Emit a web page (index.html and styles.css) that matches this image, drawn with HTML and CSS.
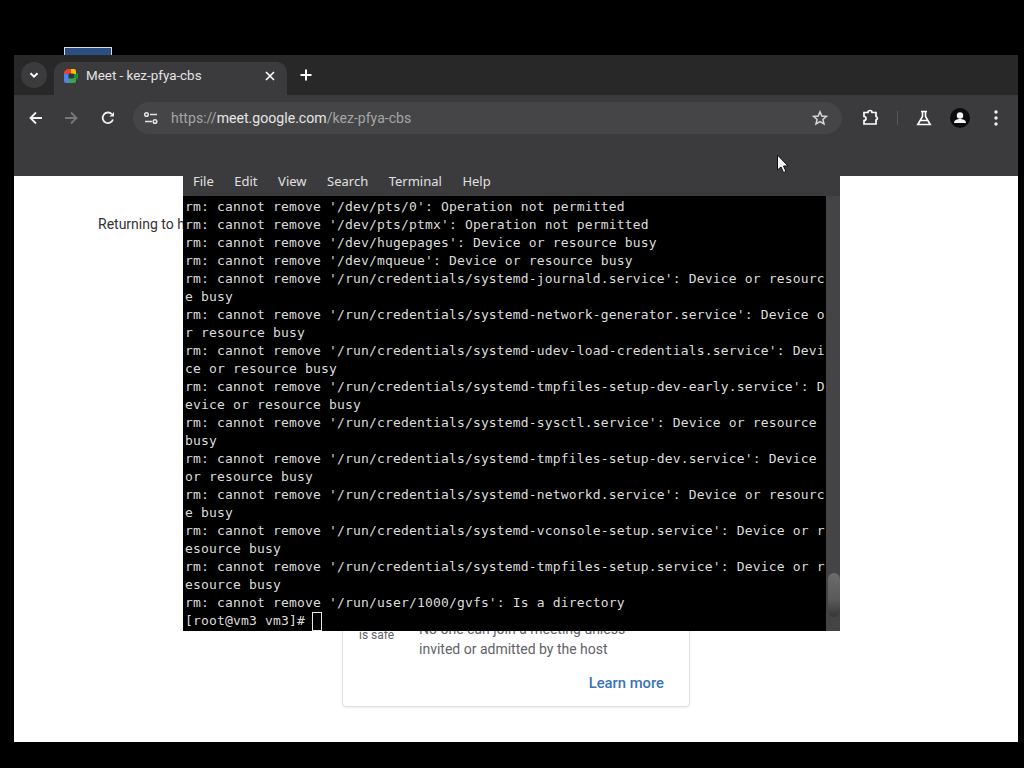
FILE: index.html
```html
<!DOCTYPE html>
<html lang="en">
<head>
<meta charset="utf-8">
<title>Meet - kez-pfya-cbs</title>
<link rel="stylesheet" href="styles.css">
</head>
<body class="desktop">
<div class="back-window"></div>
<main class="browser">
  <div class="tabstrip">
    <button class="tab-search" aria-label="Search tabs"><svg width="12" height="12" viewBox="0 0 12 12"><path d="M2.500 4.200 6 7.700l3.500-3.500" fill="none" stroke="#fff" stroke-width="2"/></svg></button>
    <div class="tab">
      <svg class="favicon" width="16" height="16" viewBox="0 0 16 16"><path d="M4 1h4v5H1V4z" fill="#ea4335"/><path d="M8 1h3a2 2 0 0 1 2 2v3H8z" fill="#fbbc04"/><path d="M1 6h5v4H1z" fill="#4285f4"/><path d="M1 10h5v5H3a2 2 0 0 1-2-2z" fill="#5b7fe0"/><path d="M6 10h7v3a2 2 0 0 1-2 2H6z" fill="#34a853"/><path d="M11 6h2l2-1.500v7L13 10h-2z" fill="#1e8e3e"/><rect x="5.500" y="5.500" width="5" height="5" fill="#2f3a34"/></svg>
      <span class="tab-title">Meet - kez-pfya-cbs</span>
      <svg class="tab-close" width="10" height="10" viewBox="0 0 10 10"><path d="M1 1l8 8M9 1 1 9" stroke="#fff" stroke-width="1.700"/></svg>
    </div>
    <svg class="new-tab" width="12" height="12" viewBox="0 0 12 12"><path d="M6 .5v11M.5 6h11" stroke="#fff" stroke-width="2"/></svg>
  </div>
  <div class="toolbar">
    <div class="toolrow">
      <svg class="nav-back" width="16" height="16" viewBox="0 0 16 16"><path d="M14 8H3M8 2.500 2.500 8 8 13.500" fill="none" stroke="#f1f1f1" stroke-width="1.800"/></svg>
      <svg class="nav-forward" width="16" height="16" viewBox="0 0 16 16"><path d="M2 8h11M8 2.500 13.500 8 8 13.500" fill="none" stroke="#77787a" stroke-width="1.800"/></svg>
      <svg class="nav-reload" width="16" height="16" viewBox="0 0 16 16"><path d="M13 9.500A5.300 5.300 0 1 1 11.700 4" fill="none" stroke="#f1f1f1" stroke-width="1.800"/><path d="M9.500 6.500H14V2z" fill="#f1f1f1"/></svg>
      <div class="omnibox">
        <svg class="site-info" width="16" height="16" viewBox="0 0 16 16"><g fill="none" stroke="#e3e3e3" stroke-width="1.500"><path d="M7 4.500h7M2 11.500h7"/><circle cx="3.500" cy="4.500" r="1.800"/><circle cx="12" cy="11.500" r="1.800"/></g></svg>
        <span class="url"><span class="url-dim">https://</span>meet.google.com<span class="url-dim">/kez-pfya-cbs</span></span>
        <svg class="star" width="16" height="16" viewBox="0 0 16 16"><path d="M8 1.800 9.800 6l4.600.4-3.500 3 1.100 4.500L8 11.500l-4 2.400 1.100-4.500-3.500-3L6.200 6z" fill="none" stroke="#d8d8d8" stroke-width="1.500"/></svg>
      </div>
      <svg class="tool-ext" width="18" height="18" viewBox="0 0 18 18"><path d="M2 4.500h4a2 2 0 0 1 4 0h4v4a1.800 1.800 0 0 1 0 3.500v4H2v-3.500a2 2 0 0 0 0-4z" transform="translate(0 -1)" fill="none" stroke="#fff" stroke-width="1.700"/></svg>
      <span class="divider"></span>
      <svg class="tool-lab" width="18" height="18" viewBox="0 0 18 18"><path d="M6 2.500h6M7.500 2.500v5L2.800 15.500h12.400L10.500 7.500v-5M5.500 11.500h7" fill="none" stroke="#fff" stroke-width="1.600"/></svg>
      <svg class="tool-profile" width="20" height="20" viewBox="0 0 20 20"><circle cx="10" cy="10" r="10" fill="#0c0c0c"/><circle cx="10" cy="7.500" r="3.200" fill="#f4f4f4"/><path d="M4 15c0-3 3-4 6-4s6 1 6 4z" fill="#f4f4f4"/></svg>
      <svg class="tool-menu" width="4" height="16" viewBox="0 0 4 16"><circle cx="2" cy="2" r="1.700" fill="#f1f1f1"/><circle cx="2" cy="8" r="1.700" fill="#f1f1f1"/><circle cx="2" cy="14" r="1.700" fill="#f1f1f1"/></svg>
    </div>
  </div>
  <div class="page">
    <p class="returning">Returning to home screen</p>
    <section class="card">
      <div class="card-row">
        <div class="card-head">Your meeting<br>is safe</div>
        <div class="card-body">No one can join a meeting unless invited or admitted by the host</div>
      </div>
      <a class="learn">Learn more</a>
    </section>
  </div>
</main>
<section class="terminal">
  <nav class="term-menu"><span>File</span><span>Edit</span><span>View</span><span>Search</span><span>Terminal</span><span>Help</span></nav>
  <div class="term-main">
<pre class="term-text">rm: cannot remove '/dev/pts/0': Operation not permitted
rm: cannot remove '/dev/pts/ptmx': Operation not permitted
rm: cannot remove '/dev/hugepages': Device or resource busy
rm: cannot remove '/dev/mqueue': Device or resource busy
rm: cannot remove '/run/credentials/systemd-journald.service': Device or resourc
e busy
rm: cannot remove '/run/credentials/systemd-network-generator.service': Device o
r resource busy
rm: cannot remove '/run/credentials/systemd-udev-load-credentials.service': Devi
ce or resource busy
rm: cannot remove '/run/credentials/systemd-tmpfiles-setup-dev-early.service': D
evice or resource busy
rm: cannot remove '/run/credentials/systemd-sysctl.service': Device or resource 
busy
rm: cannot remove '/run/credentials/systemd-tmpfiles-setup-dev.service': Device 
or resource busy
rm: cannot remove '/run/credentials/systemd-networkd.service': Device or resourc
e busy
rm: cannot remove '/run/credentials/systemd-vconsole-setup.service': Device or r
esource busy
rm: cannot remove '/run/credentials/systemd-tmpfiles-setup.service': Device or r
esource busy
rm: cannot remove '/run/user/1000/gvfs': Is a directory
[root@vm3 vm3]# <span class="term-cursor"> </span></pre>
    <div class="term-scroll"><div class="term-thumb"></div></div>
  </div>
</section>
<svg class="mouse" width="14" height="21" viewBox="0 0 14 21"><path d="M1.500 1v15l3.500-3 2.500 5.500 2.500-1-2.500-5.500h4.500z" fill="#f4f4f4" stroke="#111" stroke-width="1"/></svg>
</body>
</html>
```
FILE: styles.css
```css
* { box-sizing: border-box; }
html, body { margin: 0; height: 100%; }
.desktop {
  background: #000;
  width: 1024px;
  height: 768px;
  padding: 55px 6px 26px 14px;
  overflow: hidden;
  position: relative;
  font-family: Roboto, "Liberation Sans", sans-serif;
}
.back-window {
  position: absolute;
  left: 64px;
  top: 47px;
  width: 48px;
  height: 8px;
  background: #2a4f80;
  border: 1px solid #d8dde4;
  border-bottom: 0;
}
.browser {
  height: 687px;
  display: flex;
  flex-direction: column;
  background: #fff;
}
.tabstrip {
  height: 40px;
  background: #282828;
  display: flex;
  align-items: flex-start;
  padding: 7px 0 0 7px;
}
.tab-search {
  width: 26px;
  height: 26px;
  border: 0;
  padding: 0;
  border-radius: 50%;
  background: #3b3b3d;
  display: flex;
  align-items: center;
  justify-content: center;
}
.tab {
  width: 233px;
  height: 33px;
  margin-left: 7px;
  background: #3b3b3d;
  border-radius: 10px 10px 0 0;
  display: flex;
  align-items: center;
  padding: 0 12px 6px 9px;
}
.tab-title {
  flex: 1;
  margin-left: 7px;
  font-size: 13.400px;
  color: #e3e3e3;
}
.new-tab { margin: 7px 0 0 13px; }
.toolbar {
  height: 81px;
  background: #3b3b3d;
  padding-top: 7px;
}
.toolrow {
  display: flex;
  align-items: center;
  height: 32px;
}
.nav-back { margin-left: 14px; }
.nav-forward { margin-left: 19px; }
.nav-reload { margin-left: 21px; }
.omnibox {
  width: 709px;
  height: 32px;
  margin-left: 17px;
  border-radius: 16px;
  background: #454547;
  display: flex;
  align-items: center;
  padding: 0 14px 0 10px;
}
.url {
  flex: 1;
  margin-left: 12px;
  font-size: 14.100px;
  color: #e6e6e6;
}
.url-dim { color: #a4a4a6; }
.tool-ext { margin-left: 20px; }
.divider {
  width: 1px;
  height: 14px;
  margin-left: 17px;
  background: #58585a;
}
.tool-lab { margin-left: 17px; }
.tool-profile { margin-left: 17px; }
.tool-menu { margin-left: 24px; }
.page {
  flex: 1;
  min-height: 0;
  color: #3c4043;
}
.returning {
  margin: 40px 0 0 84px;
  font-size: 14px;
  line-height: 16px;
  color: #333;
}
.card {
  width: 348px;
  height: 300px;
  margin: 175px 0 0 328px;
  border: 1px solid #e0e0e0;
  border-radius: 4px;
  box-shadow: 0 1px 2px rgba(0, 0, 0, .08);
  padding: 0 25px 13px 16px;
  display: flex;
  flex-direction: column;
  justify-content: flex-end;
}
.card-row {
  display: flex;
  align-items: flex-end;
}
.card-head {
  width: 60px;
  margin-bottom: 16px;
  font-size: 12px;
  line-height: 16px;
  color: #5f6368;
}
.card-body {
  width: 230px;
  font-size: 14px;
  line-height: 20px;
  color: #5f6368;
}
.learn {
  align-self: flex-end;
  margin-top: 14px;
  font-size: 14.800px;
  line-height: 20px;
  font-weight: 500;
  color: #3b73bb;
}
.terminal {
  position: absolute;
  left: 183px;
  top: 165px;
  width: 657px;
  height: 466px;
  background: #3b3b3d;
  display: flex;
  flex-direction: column;
}
.term-menu {
  height: 31px;
  display: flex;
  align-items: flex-end;
  gap: 20.500px;
  padding: 0 0 6px 10px;
  font-family: "Noto Sans", sans-serif;
  font-size: 13px;
  line-height: 18px;
  color: #e0e0e0;
}
.term-main {
  flex: 1;
  min-height: 0;
  display: flex;
}
.term-text {
  width: 643px;
  margin: 0;
  background: #000;
  padding: 2px 0 0 2px;
  font-family: "DejaVu Sans Mono", monospace;
  font-size: 13px;
  letter-spacing: .17px;
  line-height: 18px;
  color: #dcdcdc;
  white-space: pre;
  overflow: hidden;
}
.term-cursor {
  display: inline-block;
  width: 10px;
  height: 19px;
  margin-left: -1px;
  border: 1px solid #e6e6e6;
  vertical-align: top;
}
.term-scroll {
  flex: 1;
  background: #444446;
  padding: 377px 0 0 2px;
}
.term-thumb {
  height: 44px;
  border-radius: 6px;
  background: linear-gradient(#6c6c6c, #5a5a5a 60%, #363636);
}
.mouse {
  position: absolute;
  left: 776px;
  top: 154px;
}
```
